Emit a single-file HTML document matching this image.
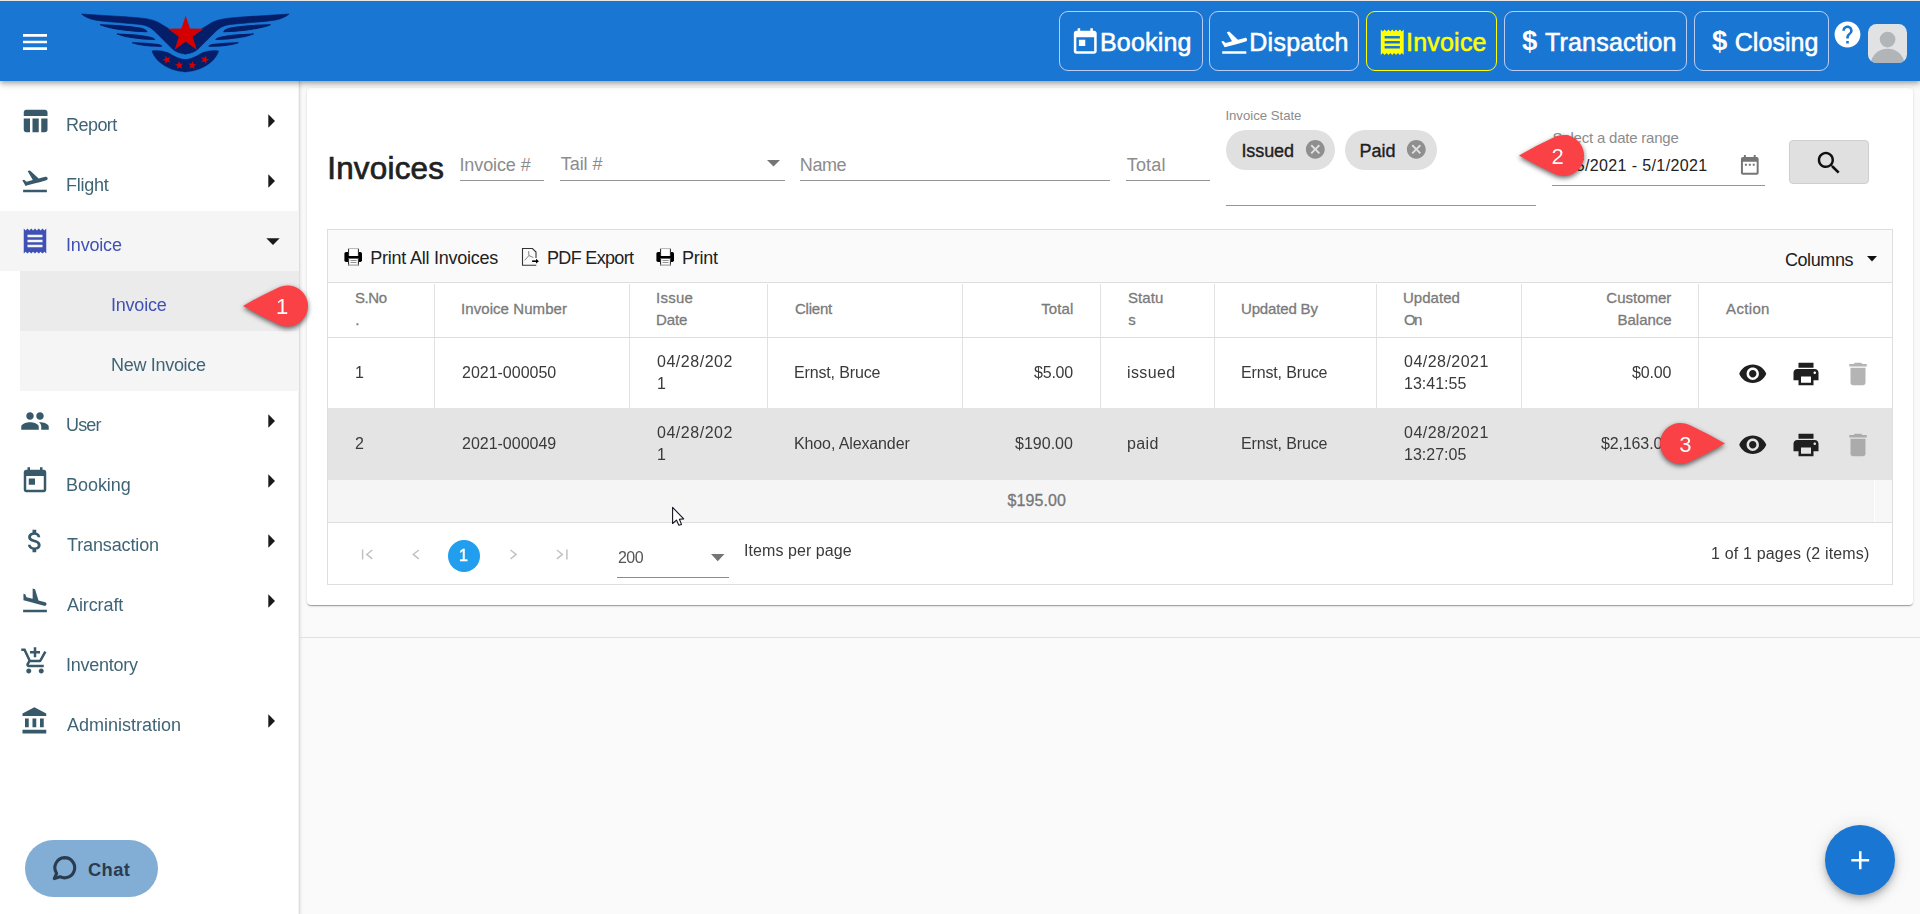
<!DOCTYPE html>
<html lang="en"><head><meta charset="utf-8"><title>Invoices</title>
<style>
html,body{margin:0;padding:0}
body{width:1920px;height:914px;overflow:hidden;position:relative;background:#fafafa;font-family:"Liberation Sans",sans-serif}
div,svg,span{position:absolute;box-sizing:border-box}
.t{white-space:nowrap;line-height:1;z-index:5}
.w{left:0;top:0;width:0;height:0;font-size:0;line-height:0}
.i{display:block;z-index:4;overflow:visible}
.topbar{left:0;top:0;width:1920px;height:81px;background:#1976d2;box-shadow:0 2px 4px -1px rgba(0,0,0,.2),0 4px 5px 0 rgba(0,0,0,.14),0 1px 10px 0 rgba(0,0,0,.12);z-index:3}
.topline{left:0;top:0;width:1920px;height:1px;background:#e9e6e3;z-index:4}
.tbtn{top:11px;height:60px;border:1px solid;border-radius:9px;box-sizing:content-box;height:58px;z-index:4}
.sidebar{left:0;top:81px;width:300px;height:833px;background:#fff;border-right:1px solid #dedede;box-shadow:inset -1px 0 0 #f4f4f4;z-index:1}
.sbsh{left:300px;top:81px;width:3px;height:833px;background:linear-gradient(to right,#ebebeb,#fafafa);z-index:0}
.sb-hl{z-index:2}
.avatar{left:1868px;top:23.800px;width:39.200px;height:39px;border-radius:8.500px;background:#e1e2e3;overflow:hidden;z-index:4}
.chat{left:25px;top:840px;width:133px;height:57px;border-radius:29px;background:#82add4;z-index:3}
.hline{left:300px;top:637px;width:1620px;height:1px;background:#e0e0e0}
.card{left:307px;top:88px;width:1606px;height:517px;background:#fff;border-radius:4px;box-shadow:0 2px 1px -1px rgba(0,0,0,.2),0 1px 1px 0 rgba(0,0,0,.14),0 1px 3px 0 rgba(0,0,0,.12);z-index:1}
.ul{height:1px;z-index:3}
.chip{top:130px;height:40px;border-radius:20px;background:#e0e0e0;z-index:2}
.sbtn{left:1789px;top:140px;width:80px;height:44px;background:#e0e0e0;border:1px solid #cfcfcf;border-radius:4px;z-index:2}
.grid{left:327px;top:229px;width:1566px;height:356px;border:1px solid #dedede;background:#fff;z-index:2}
.toolbar{left:328px;top:230px;width:1564px;height:53px;background:#fafafa;border-bottom:1px solid #dedede;z-index:3}
.ghead{left:328px;top:283px;width:1564px;height:54px;background:#fff;z-index:3}
.row2{left:328px;top:408px;width:1564px;height:72px;background:#e4e4e4;z-index:4}
.gfoot{left:328px;top:480px;width:1564px;height:42px;background:#f5f5f5;z-index:4}
.gfoot2{left:1874px;top:480px;width:18px;height:42px;background:#f7f7f7;border-left:1px solid #fff;z-index:4}
.gline{left:328px;width:1564px;height:1px;background:#dedede;z-index:4}
.vline{top:284px;width:1px;height:124px;background:#e2e2e2;z-index:3}
.pgc{left:447.800px;top:539.500px;width:32px;height:32px;border-radius:50%;background:#229eee;z-index:4}
.fab{left:1825px;top:825px;width:70px;height:70px;border-radius:50%;background:#1976d2;box-shadow:0 3px 5px -1px rgba(0,0,0,.2),0 6px 10px 0 rgba(0,0,0,.14),0 1px 18px 0 rgba(0,0,0,.12);z-index:5}
.mk{z-index:20;filter:drop-shadow(0 2.5px 2.5px rgba(0,0,0,.6));pointer-events:none}
</style></head>
<body>
<header>
<div class="topbar"></div>
<div class="topline"></div>
<svg class="i" style="left:19.00px;top:26.00px;" width="32" height="32" viewBox="0 0 24 24"><path fill="#fff" d="M3 18h18v-2H3v2zm0-5h18v-2H3v2zm0-7v2h18V6H3z"/></svg>
<svg class="i" style="left:0;top:0" width="320" height="81" viewBox="0 0 320 81"><g fill="#041e69" stroke="#041e69" stroke-linejoin="round"><path stroke-width=".600" d="M81.600 14C95 15 120 16.300 135 17.500C148 18.500 155 20 161 24L168.300 28.400L186.300 42L186.300 53.900L185.500 53.900C180 53.600 176 52 172.800 49.300L156.400 32.900C152 28.500 149 26.200 143 24.900C130 23 108 22.100 96 20.200C90 19.100 84.500 16.900 81.600 14Z"/>
<path stroke-width="1.100" d="M100.400 24.700C115 25 132 26.500 141 28.200C144 29 146 30.300 146.800 31.700C135 31.500 112 29.500 100.400 24.700Z"/>
<path stroke-width="1.100" d="M117.300 34.100C130 34.500 143 35.800 150 37.200C152.500 37.800 154 38.600 154.600 39.500C143 39.300 127 37.800 117.300 34.100Z"/>
<path stroke-width="1.100" d="M132.500 42.800C142 42.900 152 43.800 158 44.600C160 45 161 45.500 161.600 46.100C152 46.300 140 45.400 132.500 42.800Z"/>
<path stroke-width=".300" d="M151.900 50.900C156 50 162 50.300 167.900 52.600C172 54.500 176 58.300 185.500 59.600L186.300 59.600L186.300 71.900L185.500 71.900C175 71.500 166 67.500 160 62.500C156 59 153 55 151.900 50.900Z"/></g><g fill="#041e69" stroke="#041e69" stroke-linejoin="round" transform="translate(370.600 0) scale(-1 1)"><path stroke-width=".600" d="M81.600 14C95 15 120 16.300 135 17.500C148 18.500 155 20 161 24L168.300 28.400L186.300 42L186.300 53.900L185.500 53.900C180 53.600 176 52 172.800 49.300L156.400 32.900C152 28.500 149 26.200 143 24.900C130 23 108 22.100 96 20.200C90 19.100 84.500 16.900 81.600 14Z"/>
<path stroke-width="1.100" d="M100.400 24.700C115 25 132 26.500 141 28.200C144 29 146 30.300 146.800 31.700C135 31.500 112 29.500 100.400 24.700Z"/>
<path stroke-width="1.100" d="M117.300 34.100C130 34.500 143 35.800 150 37.200C152.500 37.800 154 38.600 154.600 39.500C143 39.300 127 37.800 117.300 34.100Z"/>
<path stroke-width="1.100" d="M132.500 42.800C142 42.900 152 43.800 158 44.600C160 45 161 45.500 161.600 46.100C152 46.300 140 45.400 132.500 42.800Z"/>
<path stroke-width=".300" d="M151.900 50.900C156 50 162 50.300 167.900 52.600C172 54.500 176 58.300 185.500 59.600L186.300 59.600L186.300 71.900L185.500 71.900C175 71.500 166 67.500 160 62.500C156 59 153 55 151.900 50.900Z"/></g>
<polygon fill="#d40000" points="185.70,15.70 190.01,28.57 203.58,28.69 192.67,36.77 196.75,49.71 185.70,41.83 174.65,49.71 178.73,36.77 167.82,28.69 181.39,28.57"/>
<polygon fill="#d40000" points="165.44,55.62 167.37,58.04 170.36,57.21 168.65,59.80 170.36,62.39 167.37,61.56 165.44,63.98 165.30,60.89 162.40,59.80 165.30,58.71"/><polygon fill="#d40000" points="178.74,60.92 180.12,63.70 183.22,63.51 181.01,65.68 182.14,68.57 179.39,67.14 177.00,69.11 177.51,66.05 174.90,64.39 177.96,63.93"/>
<polygon fill="#d40000" points="192.76,60.92 193.54,63.93 196.60,64.39 193.99,66.05 194.50,69.11 192.11,67.14 189.36,68.57 190.49,65.68 188.28,63.51 191.38,63.70"/><polygon fill="#d40000" points="206.16,55.52 206.30,58.61 209.20,59.70 206.30,60.79 206.16,63.88 204.23,61.46 201.24,62.29 202.95,59.70 201.24,57.11 204.23,57.94"/></svg>
<div class="tbtn" style="left:1059px;width:142px;border-color:rgba(225,228,255,.8)"></div>
<div class="tbtn" style="left:1209px;width:148px;border-color:rgba(225,228,255,.8)"></div>
<div class="tbtn" style="left:1366px;width:129px;border-color:#ffff00"></div>
<div class="tbtn" style="left:1504px;width:181px;border-color:rgba(225,228,255,.8)"></div>
<div class="tbtn" style="left:1694px;width:133px;border-color:rgba(225,228,255,.8)"></div>
<svg class="i" style="left:1070.35px;top:26.55px;" width="30.5" height="30.5" viewBox="0 0 24 24"><path fill="#fff" d="M19 3h-1V1h-2v2H8V1H6v2H5c-1.11 0-1.99.9-1.99 2L3 19c0 1.1.89 2 2 2h14c1.1 0 2-.9 2-2V5c0-1.1-.9-2-2-2zm0 16H5V8h14v11zM7 10h5v5H7z"/></svg>
<svg class="i" style="left:1219.35px;top:26.55px;" width="30.5" height="30.5" viewBox="0 0 24 24"><path fill="#fff" d="M2.5 19h19v2h-19zm19.57-9.36c-.21-.8-1.04-1.28-1.84-1.06L14.92 10l-6.9-6.43-1.93.51 4.14 7.17-4.97 1.33-1.97-1.54-1.45.39 1.82 3.16.77 1.33 1.6-.43 5.31-1.42 4.35-1.16L21 11.49c.81-.23 1.28-1.05 1.07-1.85z"/></svg>
<svg class="i" style="left:1376.75px;top:26.95px;" width="30.5" height="30.5" viewBox="0 0 24 24"><path fill="#ffff00" d="M18 17H6v-2h12v2zm0-4H6v-2h12v2zm0-4H6V7h12v2zM3 22l1.5-1.5L6 22l1.5-1.5L9 22l1.5-1.5L12 22l1.5-1.5L15 22l1.5-1.5L18 22l1.5-1.5L21 22V2l-1.5 1.5L18 2l-1.5 1.5L15 2l-1.5 1.5L12 2l-1.5 1.5L9 2 7.5 3.5 6 2 4.500 3.5 3 2v20z"/></svg>
<svg class="i" style="left:1831.90px;top:18.50px;" width="31" height="31" viewBox="0 0 24 24"><path fill="#fff" d="M12 2C6.48 2 2 6.48 2 12s4.48 10 10 10 10-4.48 10-10S17.52 2 12 2zm1 17h-2v-2h2v2zm2.070-7.750l-.9.920C13.450 12.900 13 13.500 13 15h-2v-.500c0-1.100.450-2.100 1.170-2.830l1.240-1.260c.370-.360.590-.860.590-1.410 0-1.100-.900-2-2-2s-2 .900-2 2H8c0-2.210 1.790-4 4-4s4 1.790 4 4c0 .880-.360 1.680-.930 2.250z"/></svg>
<div class="avatar"><svg class="i" style="left:0;top:0" width="39.200" height="39" viewBox="0 0 40 40" preserveAspectRatio="none"><circle cx="20" cy="16" r="8" fill="#b1b5b7"/><ellipse cx="20" cy="41" rx="17" ry="15.500" fill="#b1b5b7"/></svg></div>
<span class="t" style="left:1099.90px;top:30px;font-size:25px;color:#fff;letter-spacing:0.210px;-webkit-text-stroke:0.55px #fff;">Booking</span>
<span class="t" style="left:1249.30px;top:30px;font-size:25px;color:#fff;letter-spacing:0.263px;-webkit-text-stroke:0.55px #fff;">Dispatch</span>
<span class="t" style="left:1406.00px;top:30px;font-size:25px;color:#ffff00;letter-spacing:0.215px;-webkit-text-stroke:0.55px #ffff00;">Invoice</span>
<span class="t" style="left:1545.00px;top:30px;font-size:25px;color:#fff;letter-spacing:0.182px;-webkit-text-stroke:0.55px #fff;">Transaction</span>
<span class="t" style="left:1734.80px;top:30px;font-size:25px;color:#fff;letter-spacing:0.022px;-webkit-text-stroke:0.55px #fff;">Closing</span>
<span class="t" style="left:1521.90px;top:27px;font-size:27.5px;color:#fff;font-weight:700;">$</span>
<span class="t" style="left:1711.90px;top:27px;font-size:27.5px;color:#fff;font-weight:700;">$</span>
</header>
<nav>
<div class="sidebar"></div><div class="sbsh"></div>
<div class="sb-hl" style="left:0;top:211px;width:299px;height:60px;background:#f5f5f5"></div>
<div class="sb-hl" style="left:20px;top:271px;width:279px;height:60px;background:#ebebeb"></div>
<div class="sb-hl" style="left:20px;top:331px;width:279px;height:60px;background:#f5f5f5"></div>
<svg class="i" style="left:20.00px;top:106.30px;" width="30" height="30" viewBox="0 0 24 24"><path fill="#37596a" d="M10 10.02h5V21h-5zM17 21h3c1.1 0 2-.9 2-2v-9h-5v11zm3-18H5c-1.1 0-2 .9-2 2v3h19V5c0-1.1-.9-2-2-2zM3 19c0 1.1.9 2 2 2h3V10H3v9z"/></svg>
<svg class="i" style="left:255.20px;top:104.60px;" width="32" height="32" viewBox="0 0 24 24"><path fill="#1a1a1a" d="M10 17l5-5-5-5v10z"/></svg>
<svg class="i" style="left:20.00px;top:166.30px;" width="30" height="30" viewBox="0 0 24 24"><path fill="#37596a" d="M2.5 19h19v2h-19zm19.57-9.36c-.21-.8-1.04-1.28-1.84-1.06L14.92 10l-6.9-6.43-1.93.51 4.14 7.17-4.97 1.33-1.97-1.54-1.45.39 1.82 3.16.77 1.33 1.6-.43 5.31-1.42 4.35-1.16L21 11.49c.81-.23 1.28-1.05 1.07-1.85z"/></svg>
<svg class="i" style="left:255.20px;top:164.60px;" width="32" height="32" viewBox="0 0 24 24"><path fill="#1a1a1a" d="M10 17l5-5-5-5v10z"/></svg>
<svg class="i" style="left:20.00px;top:226.30px;" width="30" height="30" viewBox="0 0 24 24"><path fill="#3f51b5" d="M18 17H6v-2h12v2zm0-4H6v-2h12v2zm0-4H6V7h12v2zM3 22l1.5-1.5L6 22l1.5-1.5L9 22l1.5-1.5L12 22l1.5-1.5L15 22l1.5-1.5L18 22l1.5-1.5L21 22V2l-1.5 1.5L18 2l-1.5 1.5L15 2l-1.5 1.5L12 2l-1.5 1.5L9 2 7.5 3.5 6 2 4.500 3.5 3 2v20z"/></svg>
<svg class="i" style="left:256.50px;top:224.70px;" width="32" height="32" viewBox="0 0 24 24"><path fill="#1a1a1a" d="M7 10l5 5 5-5z"/></svg>
<svg class="i" style="left:20.00px;top:406.30px;" width="30" height="30" viewBox="0 0 24 24"><path fill="#37596a" d="M16 11c1.66 0 2.99-1.34 2.99-3S17.66 5 16 5c-1.66 0-3 1.34-3 3s1.34 3 3 3zm-8 0c1.66 0 2.99-1.34 2.99-3S9.66 5 8 5C6.34 5 5 6.34 5 8s1.34 3 3 3zm0 2c-2.33 0-7 1.17-7 3.5V19h14v-2.500c0-2.33-4.67-3.5-7-3.5zm8 0c-.29 0-.62.02-.97.05 1.16.84 1.97 1.97 1.97 3.45V19h6v-2.500c0-2.33-4.67-3.5-7-3.5z"/></svg>
<svg class="i" style="left:255.20px;top:404.60px;" width="32" height="32" viewBox="0 0 24 24"><path fill="#1a1a1a" d="M10 17l5-5-5-5v10z"/></svg>
<svg class="i" style="left:20.00px;top:466.30px;" width="30" height="30" viewBox="0 0 24 24"><path fill="#37596a" d="M19 3h-1V1h-2v2H8V1H6v2H5c-1.11 0-1.99.9-1.99 2L3 19c0 1.1.89 2 2 2h14c1.1 0 2-.9 2-2V5c0-1.1-.9-2-2-2zm0 16H5V8h14v11zM7 10h5v5H7z"/></svg>
<svg class="i" style="left:255.20px;top:464.60px;" width="32" height="32" viewBox="0 0 24 24"><path fill="#1a1a1a" d="M10 17l5-5-5-5v10z"/></svg>
<svg class="i" style="left:20.00px;top:526.30px;" width="30" height="30" viewBox="0 0 24 24"><path fill="#37596a" d="M11.8 10.9c-2.27-.59-3-1.2-3-2.15 0-1.09 1.01-1.85 2.7-1.85 1.78 0 2.44.85 2.5 2.1h2.21c-.07-1.72-1.12-3.3-3.21-3.81V3h-3v2.160c-1.94.42-3.5 1.68-3.5 3.61 0 2.31 1.91 3.46 4.7 4.13 2.5.6 3 1.48 3 2.41 0 .69-.49 1.79-2.7 1.79-2.06 0-2.87-.92-2.98-2.1h-2.2c.12 2.19 1.76 3.42 3.68 3.83V21h3v-2.150c1.95-.37 3.5-1.5 3.5-3.55 0-2.84-2.43-3.81-4.7-4.4z"/></svg>
<svg class="i" style="left:255.20px;top:524.60px;" width="32" height="32" viewBox="0 0 24 24"><path fill="#1a1a1a" d="M10 17l5-5-5-5v10z"/></svg>
<svg class="i" style="left:20.00px;top:586.30px;" width="30" height="30" viewBox="0 0 24 24"><path fill="#37596a" d="M2.5 19h19v2h-19zm7.18-5.73l4.35 1.16 5.31 1.42c.8.21 1.62-.26 1.84-1.06.21-.8-.26-1.62-1.06-1.84l-5.31-1.42-2.76-9.02L10.120 2v8.28L5.15 8.95l-.93-2.32-1.45-.39v5.17l1.6.43 5.31 1.430z"/></svg>
<svg class="i" style="left:255.20px;top:584.60px;" width="32" height="32" viewBox="0 0 24 24"><path fill="#1a1a1a" d="M10 17l5-5-5-5v10z"/></svg>
<svg class="i" style="left:20.00px;top:646.30px;" width="30" height="30" viewBox="0 0 24 24"><path fill="#37596a" d="M11 9h2V6h3V4h-3V1h-2v3H8v2h3v3zm-4 9c-1.1 0-1.99.9-1.99 2S5.9 22 7 22s2-.9 2-2-.9-2-2-2zm10 0c-1.1 0-1.99.9-1.99 2s.89 2 1.990 2 2-.9 2-2-.9-2-2-2zm-9.830-3.25l.03-.12.9-1.63h7.450c.75 0 1.410-.41 1.750-1.030l3.860-7.010L19.420 4h-.010l-1.100 2-2.760 5H8.530l-.130-.270L6.160 6l-.950-2-.940-2H1v2h2l3.600 7.590-1.350 2.450c-.160.280-.250.610-.250.960 0 1.100.900 2 2 2h12v-2H7.420c-.130 0-.250-.110-.250-.250z"/></svg>
<svg class="i" style="left:20.00px;top:706.30px;" width="30" height="30" viewBox="0 0 24 24"><path fill="#37596a" d="M4 10v7h3v-7H4zm6 0v7h3v-7h-3zM2 22h19v-3H2v3zm14-12v7h3v-7h-3zm-4.500-9L2 6v2h19V6l-9.500-5z"/></svg>
<svg class="i" style="left:255.20px;top:704.60px;" width="32" height="32" viewBox="0 0 24 24"><path fill="#1a1a1a" d="M10 17l5-5-5-5v10z"/></svg>
<div class="chat"></div>
<svg class="i" style="left:50px;top:853px" width="30" height="32" viewBox="0 0 30 32"><path fill="none" stroke="#2a3c4f" stroke-width="3.1" stroke-linejoin="round" stroke-linecap="round" d="M14.6 4.6a10.1 10.1 0 1 1 -4.6 19.1 L4.3 25.6 L6.6 20.3 A10.1 10.1 0 0 1 14.6 4.6z"/></svg>
<span class="t" style="left:65.50px;top:116px;font-size:18px;color:#3f6475;letter-spacing:-0.545px;will-change:transform;">Report</span>
<span class="t" style="left:65.50px;top:176px;font-size:18px;color:#3f6475;letter-spacing:-0.243px;will-change:transform;">Flight</span>
<span class="t" style="left:65.50px;top:236px;font-size:18px;color:#3f51b5;letter-spacing:-0.187px;will-change:transform;">Invoice</span>
<span class="t" style="left:65.50px;top:416px;font-size:18px;color:#3f6475;letter-spacing:-0.870px;will-change:transform;">User</span>
<span class="t" style="left:65.50px;top:476px;font-size:18px;color:#3f6475;letter-spacing:-0.040px;will-change:transform;">Booking</span>
<span class="t" style="left:66.50px;top:536px;font-size:18px;color:#3f6475;letter-spacing:-0.126px;will-change:transform;">Transaction</span>
<span class="t" style="left:66.50px;top:596px;font-size:18px;color:#3f6475;letter-spacing:-0.101px;will-change:transform;">Aircraft</span>
<span class="t" style="left:65.50px;top:656px;font-size:18px;color:#3f6475;letter-spacing:-0.267px;will-change:transform;">Inventory</span>
<span class="t" style="left:66.50px;top:716px;font-size:18px;color:#3f6475;will-change:transform;">Administration</span>
<span class="t" style="left:110.50px;top:296px;font-size:18px;color:#3f51b5;letter-spacing:-0.220px;will-change:transform;">Invoice</span>
<span class="t" style="left:110.50px;top:356px;font-size:18px;color:#3f6475;letter-spacing:-0.303px;will-change:transform;">New Invoice</span>
<span class="t" style="left:88.00px;top:861px;font-size:18.3px;color:#2a3c4f;letter-spacing:0.421px;font-weight:700;">Chat</span>
</nav>
<main>
<div class="hline"></div>
<div class="card"></div>
<div class="ul" style="left:460px;top:180px;width:84px;background:#959595"></div>
<div class="ul" style="left:560px;top:180px;width:225px;background:#959595"></div>
<div class="ul" style="left:800px;top:180px;width:310px;background:#959595"></div>
<div class="ul" style="left:1126px;top:180px;width:84px;background:#959595"></div>
<div class="ul" style="left:1226px;top:205px;width:310px;background:#959595"></div>
<div class="ul" style="left:1552px;top:185px;width:213px;background:#959595"></div>
<svg class="i" style="left:766.5px;top:160px" width="13" height="7" viewBox="0 0 13 7"><path fill="#757575" d="M0 0h13L6.5 6.5z"/></svg>
<div class="chip" style="left:1226px;width:109px"></div>
<div class="chip" style="left:1345px;width:92px"></div>
<svg class="i" style="left:1303.80px;top:138.10px;" width="22.6" height="22.6" viewBox="0 0 24 24"><path fill="#8f8f8f" d="M12 2C6.470 2 2 6.470 2 12s4.470 10 10 10 10-4.470 10-10S17.530 2 12 2zm5 13.590L15.590 17 12 13.410 8.410 17 7 15.590 10.590 12 7 8.410 8.410 7 12 10.590 15.590 7 17 8.410 13.410 12 17 15.590z"/></svg>
<svg class="i" style="left:1405.00px;top:138.10px;" width="22.6" height="22.6" viewBox="0 0 24 24"><path fill="#8f8f8f" d="M12 2C6.470 2 2 6.470 2 12s4.470 10 10 10 10-4.470 10-10S17.530 2 12 2zm5 13.590L15.590 17 12 13.410 8.410 17 7 15.590 10.590 12 7 8.410 8.410 7 12 10.590 15.590 7 17 8.410 13.410 12 17 15.590z"/></svg>
<svg class="i" style="left:1737.70px;top:153.20px;" width="23.6" height="23.6" viewBox="0 0 24 24"><path fill="#757575" d="M9 11H7v2h2v-2zm4 0h-2v2h2v-2zm4 0h-2v2h2v-2zm2-7h-1V2h-2v2H8V2H6v2H5c-1.110 0-1.990.900-1.990 2L3 20c0 1.100.890 2 2 2h14c1.100 0 2-.900 2-2V6c0-1.100-.900-2-2-2zm0 16H5V9h14v11z"/></svg>
<div class="sbtn"></div>
<svg class="i" style="left:1813.80px;top:147.80px;" width="30" height="30" viewBox="0 0 24 24"><path fill="#111" d="M15.500 14h-.790l-.280-.270C15.410 12.590 16 11.110 16 9.500 16 5.910 13.090 3 9.500 3S3 5.910 3 9.500 5.910 16 9.500 16c1.610 0 3.090-.590 4.230-1.570l.270.280v.790l5 4.990L20.490 19l-4.990-5zm-6 0C7.010 14 5 11.990 5 9.500S7.010 5 9.500 5 14 7.010 14 9.500 11.990 14 9.500 14z"/></svg>
<div class="grid"></div>
<div class="toolbar"></div>
<div class="ghead"></div>
<div class="row2"></div>
<div class="gfoot"></div><div class="gfoot2"></div>
<div class="gline" style="top:337px"></div><div class="gline" style="top:522px"></div>
<div class="vline" style="left:434px"></div>
<div class="vline" style="left:629px"></div>
<div class="vline" style="left:767px"></div>
<div class="vline" style="left:962px"></div>
<div class="vline" style="left:1100px"></div>
<div class="vline" style="left:1214px"></div>
<div class="vline" style="left:1376px"></div>
<div class="vline" style="left:1521px"></div>
<div class="vline" style="left:1698px"></div>
<svg class="i" style="left:1866.5px;top:255.7px" width="10" height="6" viewBox="0 0 10 6"><path fill="#111" d="M0 0h10L5 5.6z"/></svg>
<svg class="i" style="left:344px;top:247px" width="19" height="20" viewBox="0 0 19 20"><rect x=".4" y="4.900" width="17.600" height="10.100" rx="1.700" fill="#000"/><rect x="4.100" y="1.100" width="10.800" height="7.900" fill="#fff"/><path fill="none" stroke="#1a1a1a" stroke-width="1" d="M4.600 9V1.600M14.400 9V1.600"/><path fill="none" stroke="#b5b5b5" stroke-width="1" d="M4.100 1.600h10.800"/><rect x="4.100" y="11.600" width="10.800" height="7.100" fill="#fff"/><path fill="none" stroke="#1a1a1a" stroke-width="1" d="M4.600 11.600v7M14.400 11.600v7"/><path fill="none" stroke="#a8a8a8" stroke-width="1.300" d="M4.100 18.100h10.800"/><path fill="none" stroke="#888" stroke-width=".9" d="M6.400 13.500h6.200M6.400 15.500h6.200"/></svg>
<svg class="i" style="left:656px;top:247px" width="19" height="20" viewBox="0 0 19 20"><rect x=".4" y="4.900" width="17.600" height="10.100" rx="1.700" fill="#000"/><rect x="4.100" y="1.100" width="10.800" height="7.900" fill="#fff"/><path fill="none" stroke="#1a1a1a" stroke-width="1" d="M4.600 9V1.600M14.400 9V1.600"/><path fill="none" stroke="#b5b5b5" stroke-width="1" d="M4.100 1.600h10.800"/><rect x="4.100" y="11.600" width="10.800" height="7.100" fill="#fff"/><path fill="none" stroke="#1a1a1a" stroke-width="1" d="M4.600 11.600v7M14.400 11.600v7"/><path fill="none" stroke="#a8a8a8" stroke-width="1.300" d="M4.100 18.100h10.800"/><path fill="none" stroke="#888" stroke-width=".9" d="M6.400 13.500h6.200M6.400 15.500h6.200"/></svg>
<svg class="i" style="left:522px;top:248px" width="18" height="18" viewBox="0 0 18 18"><path fill="none" stroke="#333" stroke-width="1.100" d="M14 10V4.100L10.400.500H.500v16.700h13.800"/><path fill="none" stroke="#666" stroke-width=".8" d="M6.600 3.200l.3 4.400-4.200 4.700M6.900 7.600l4.500 1.900"/><path fill="none" stroke="#000" stroke-width="1.600" d="M10.100 13.200h5"/><path fill="#000" d="M14 10.800l2.900 2.400-2.900 2.400z"/></svg>
<svg class="i" style="left:1738.25px;top:359.25px;" width="29.5" height="29.5" viewBox="0 0 24 24"><path fill="#1f1f1f" d="M12 4.500C7 4.500 2.730 7.610 1 12c1.730 4.390 6 7.500 11 7.500s9.270-3.110 11-7.500c-1.730-4.390-6-7.500-11-7.500zM12 17c-2.760 0-5-2.240-5-5s2.240-5 5-5 5 2.240 5 5-2.240 5-5 5zm0-8c-1.660 0-3 1.340-3 3s1.340 3 3 3 3-1.340 3-3-1.340-3-3-3z"/></svg>
<svg class="i" style="left:1790.50px;top:359.00px;" width="30" height="30" viewBox="0 0 24 24"><path fill="#1f1f1f" d="M19 8H5c-1.660 0-3 1.340-3 3v6h4v4h12v-4h4v-6c0-1.660-1.340-3-3-3zm-3 11H8v-5h8v5zm3-7c-.550 0-1-.450-1-1s.450-1 1-1 1 .450 1 1-.450 1-1 1zm-1-9H6v4h12V3z"/></svg>
<svg class="i" style="left:1843.00px;top:359.00px;" width="30" height="30" viewBox="0 0 24 24"><path fill="#b4b4b4" d="M6 19c0 1.100.900 2 2 2h8c1.100 0 2-.900 2-2V7H6v12zM19 4h-3.500l-1-1h-5l-1 1H5v2h14V4z"/></svg>
<svg class="i" style="left:1738.25px;top:430.25px;" width="29.5" height="29.5" viewBox="0 0 24 24"><path fill="#1f1f1f" d="M12 4.500C7 4.500 2.730 7.610 1 12c1.730 4.390 6 7.500 11 7.500s9.270-3.110 11-7.500c-1.730-4.390-6-7.500-11-7.500zM12 17c-2.760 0-5-2.240-5-5s2.240-5 5-5 5 2.240 5 5-2.240 5-5 5zm0-8c-1.660 0-3 1.340-3 3s1.340 3 3 3 3-1.340 3-3-1.340-3-3-3z"/></svg>
<svg class="i" style="left:1790.50px;top:430.00px;" width="30" height="30" viewBox="0 0 24 24"><path fill="#1f1f1f" d="M19 8H5c-1.660 0-3 1.340-3 3v6h4v4h12v-4h4v-6c0-1.660-1.340-3-3-3zm-3 11H8v-5h8v5zm3-7c-.550 0-1-.450-1-1s.450-1 1-1 1 .450 1 1-.450 1-1 1zm-1-9H6v4h12V3z"/></svg>
<svg class="i" style="left:1843.00px;top:430.00px;" width="30" height="30" viewBox="0 0 24 24"><path fill="#ababab" d="M6 19c0 1.100.900 2 2 2h8c1.100 0 2-.900 2-2V7H6v12zM19 4h-3.500l-1-1h-5l-1 1H5v2h14V4z"/></svg>
<svg class="i" style="left:355px;top:540px" width="220" height="30" viewBox="355 540 220 30"><path fill="none" stroke="#c2c2c2" stroke-width="1.500" d="M362.600 549.500v10M372.300 550l-5.500 4.400 5.500 4.400M418.800 550l-5.500 4.400 5.500 4.400M510.600 550l5.500 4.400-5.500 4.400M556.900 550l5.500 4.400-5.500 4.400M566.900 549.500v10"/></svg>
<div class="pgc"></div>
<svg class="i" style="left:711.3px;top:553.8px" width="13.500" height="7.500" viewBox="0 0 13.500 7.500"><path fill="#757575" d="M0 0h13.500L6.750 7.200z"/></svg>
<div class="ul" style="left:617px;top:577px;width:112px;background:#8a8a8a"></div>
<span class="t" style="left:327.20px;top:153px;font-size:31.4px;color:#212121;letter-spacing:0.234px;-webkit-text-stroke:0.7px #212121;">Invoices</span>
<span class="t" style="left:459.40px;top:156px;font-size:18px;color:#8c8c8c;letter-spacing:-0.092px;">Invoice #</span>
<span class="t" style="left:560.80px;top:155px;font-size:18px;color:#8c8c8c;letter-spacing:-0.082px;">Tail #</span>
<span class="t" style="left:799.80px;top:156px;font-size:18px;color:#8c8c8c;letter-spacing:-0.401px;">Name</span>
<span class="t" style="left:1126.70px;top:156px;font-size:18px;color:#8c8c8c;letter-spacing:0.194px;">Total</span>
<span class="t" style="left:1225.40px;top:109px;font-size:13.2px;color:#8c8c8c;letter-spacing:-0.017px;">Invoice State</span>
<span class="t" style="left:1241.40px;top:142px;font-size:18px;color:#212121;letter-spacing:-0.084px;-webkit-text-stroke:0.35px #212121;">Issued</span>
<span class="t" style="left:1359.40px;top:142px;font-size:18px;color:#212121;letter-spacing:-0.005px;-webkit-text-stroke:0.35px #212121;">Paid</span>
<span class="t" style="left:1552.50px;top:130px;font-size:15px;color:#8c8c8c;letter-spacing:-0.208px;">Select a date range</span>
<span class="t" style="left:1552.30px;top:158px;font-size:16px;color:#212121;letter-spacing:0.380px;">4/25/2021 - 5/1/2021</span>
<span class="t" style="left:370.30px;top:249px;font-size:18px;color:#212121;letter-spacing:-0.238px;">Print All Invoices</span>
<span class="t" style="left:547.00px;top:249px;font-size:18px;color:#212121;letter-spacing:-0.669px;">PDF Export</span>
<span class="t" style="left:682.00px;top:249px;font-size:18px;color:#212121;letter-spacing:-0.252px;">Print</span>
<span class="t" style="left:1784.90px;top:251px;font-size:18px;color:#212121;letter-spacing:-0.404px;">Columns</span>
<span class="w"><span class="t" style="left:355.00px;top:290px;font-size:15px;color:#7a7a7a;letter-spacing:-0.402px;-webkit-text-stroke:0.3px #7a7a7a;">S.No</span><span class="t" style="left:355.20px;top:312px;font-size:15px;color:#7a7a7a;-webkit-text-stroke:0.3px #7a7a7a;">.</span></span>
<span class="t" style="left:461.00px;top:301px;font-size:15px;color:#7a7a7a;letter-spacing:0.073px;-webkit-text-stroke:0.3px #7a7a7a;">Invoice Number</span>
<span class="w"><span class="t" style="left:656.00px;top:290px;font-size:15px;color:#7a7a7a;letter-spacing:0.248px;-webkit-text-stroke:0.3px #7a7a7a;">Issue</span> <span class="t" style="left:656.00px;top:312px;font-size:15px;color:#7a7a7a;letter-spacing:-0.114px;-webkit-text-stroke:0.3px #7a7a7a;">Date</span></span>
<span class="t" style="left:795.00px;top:301px;font-size:15px;color:#7a7a7a;letter-spacing:-0.236px;-webkit-text-stroke:0.3px #7a7a7a;">Client</span>
<span class="t" style="left:1041.20px;top:301px;font-size:15px;color:#7a7a7a;letter-spacing:0.112px;-webkit-text-stroke:0.3px #7a7a7a;">Total</span>
<span class="w"><span class="t" style="left:1128.00px;top:290px;font-size:15px;color:#7a7a7a;letter-spacing:0.079px;-webkit-text-stroke:0.3px #7a7a7a;">Statu</span><span class="t" style="left:1128.30px;top:312px;font-size:15px;color:#7a7a7a;-webkit-text-stroke:0.3px #7a7a7a;">s</span></span>
<span class="t" style="left:1241.00px;top:301px;font-size:15px;color:#7a7a7a;letter-spacing:-0.165px;-webkit-text-stroke:0.3px #7a7a7a;">Updated By</span>
<span class="w"><span class="t" style="left:1403.00px;top:290px;font-size:15px;color:#7a7a7a;letter-spacing:0.022px;-webkit-text-stroke:0.3px #7a7a7a;">Updated</span> <span class="t" style="left:1404.00px;top:312px;font-size:15px;color:#7a7a7a;letter-spacing:-1.667px;-webkit-text-stroke:0.3px #7a7a7a;">On</span></span>
<span class="w"><span class="t" style="left:1606.30px;top:290px;font-size:15px;color:#7a7a7a;-webkit-text-stroke:0.3px #7a7a7a;">Customer</span> <span class="t" style="left:1617.50px;top:312px;font-size:15px;color:#7a7a7a;letter-spacing:-0.011px;-webkit-text-stroke:0.3px #7a7a7a;">Balance</span></span>
<span class="t" style="left:1726.10px;top:301px;font-size:15px;color:#7a7a7a;letter-spacing:0.331px;-webkit-text-stroke:0.3px #7a7a7a;">Action</span>
<span class="t" style="left:354.80px;top:365px;font-size:16px;color:#3a3a3a;will-change:transform;">1</span>
<span class="t" style="left:462.00px;top:365px;font-size:16px;color:#3a3a3a;letter-spacing:-0.011px;will-change:transform;">2021-000050</span>
<span class="w"><span class="t" style="left:657.00px;top:354px;font-size:16px;color:#3a3a3a;letter-spacing:0.527px;will-change:transform;">04/28/202</span><span class="t" style="left:657.00px;top:376px;font-size:16px;color:#3a3a3a;will-change:transform;">1</span></span>
<span class="t" style="left:794.00px;top:365px;font-size:16px;color:#3a3a3a;letter-spacing:-0.148px;will-change:transform;">Ernst, Bruce</span>
<span class="t" style="left:1033.70px;top:365px;font-size:16px;color:#3a3a3a;letter-spacing:-0.210px;will-change:transform;">$5.00</span>
<span class="t" style="left:1127.00px;top:365px;font-size:16px;color:#3a3a3a;letter-spacing:0.390px;will-change:transform;">issued</span>
<span class="t" style="left:1241.00px;top:365px;font-size:16px;color:#3a3a3a;letter-spacing:-0.148px;will-change:transform;">Ernst, Bruce</span>
<span class="w"><span class="t" style="left:1404.00px;top:354px;font-size:16px;color:#3a3a3a;letter-spacing:0.480px;will-change:transform;">04/28/2021</span> <span class="t" style="left:1403.60px;top:376px;font-size:16px;color:#3a3a3a;will-change:transform;">13:41:55</span></span>
<span class="t" style="left:1631.50px;top:365px;font-size:16px;color:#3a3a3a;letter-spacing:-0.160px;will-change:transform;">$0.00</span>
<span class="t" style="left:354.80px;top:436px;font-size:16px;color:#3a3a3a;will-change:transform;">2</span>
<span class="t" style="left:462.00px;top:436px;font-size:16px;color:#3a3a3a;letter-spacing:-0.011px;will-change:transform;">2021-000049</span>
<span class="w"><span class="t" style="left:657.00px;top:425px;font-size:16px;color:#3a3a3a;letter-spacing:0.527px;will-change:transform;">04/28/202</span><span class="t" style="left:657.00px;top:447px;font-size:16px;color:#3a3a3a;will-change:transform;">1</span></span>
<span class="t" style="left:794.00px;top:436px;font-size:16px;color:#3a3a3a;letter-spacing:-0.120px;will-change:transform;">Khoo, Alexander</span>
<span class="t" style="left:1015.00px;top:436px;font-size:16px;color:#3a3a3a;letter-spacing:0.010px;will-change:transform;">$190.00</span>
<span class="t" style="left:1127.00px;top:436px;font-size:16px;color:#3a3a3a;letter-spacing:0.383px;will-change:transform;">paid</span>
<span class="t" style="left:1241.00px;top:436px;font-size:16px;color:#3a3a3a;letter-spacing:-0.148px;will-change:transform;">Ernst, Bruce</span>
<span class="w"><span class="t" style="left:1404.00px;top:425px;font-size:16px;color:#3a3a3a;letter-spacing:0.480px;will-change:transform;">04/28/2021</span> <span class="t" style="left:1403.60px;top:447px;font-size:16px;color:#3a3a3a;will-change:transform;">13:27:05</span></span>
<span class="t" style="left:1600.80px;top:436px;font-size:16px;color:#3a3a3a;letter-spacing:-0.135px;will-change:transform;">$2,163.00</span>
<span class="t" style="left:1007.50px;top:493px;font-size:16px;color:#777;letter-spacing:0.094px;-webkit-text-stroke:0.3px #777;">$195.00</span>
<span class="t" style="left:459.30px;top:548px;font-size:16px;color:#fff;-webkit-text-stroke:0.5px #fff;will-change:transform;">1</span>
<span class="t" style="left:617.50px;top:550px;font-size:16px;color:#555;letter-spacing:-0.548px;will-change:transform;">200</span>
<span class="t" style="left:744.00px;top:543px;font-size:16px;color:#3a3a3a;letter-spacing:0.067px;will-change:transform;">Items per page</span>
<span class="t" style="left:1711.10px;top:546px;font-size:16px;color:#3a3a3a;letter-spacing:0.171px;will-change:transform;">1 of 1 pages (2 items)</span>
</main>
<aside>
<svg class="i mk" style="left:0;top:0" width="1920" height="914" viewBox="0 0 1920 914"><path fill="#fa4146" d="M243.00 306.00Q260.53 295.90 278.06 287.80A20.5 20.5 0 1 1 278.06 324.20Q260.53 316.10 243.00 306.00Z"/></svg>
<svg class="i mk" style="left:0;top:0" width="1920" height="914" viewBox="0 0 1920 914"><path fill="#fa4146" d="M1519.00 155.50Q1536.53 145.40 1554.06 137.30A20.5 20.5 0 1 1 1554.06 173.70Q1536.53 165.60 1519.00 155.50Z"/></svg>
<svg class="i mk" style="left:0;top:0" width="1920" height="914" viewBox="0 0 1920 914"><path fill="#fa4146" d="M1725.00 443.50Q1707.47 433.40 1689.94 425.30A20.5 20.5 0 1 0 1689.94 461.70Q1707.47 453.60 1725.00 443.50Z"/></svg>
<div class="fab"></div>
<svg class="i" style="left:1844.55px;top:845.45px;z-index:6;" width="30.5" height="30.5" viewBox="0 0 24 24"><path fill="#fff" d="M19 13h-6v6h-2v-6H5v-2h6V5h2v6h6v2z"/></svg>
<svg class="i" style="left:671px;top:506px;z-index:40" width="16" height="24" viewBox="0 0 16 24"><path fill="#fff" stroke="#14141f" stroke-width="1.100" stroke-linejoin="round" d="M1.600 1.400V17.500L5.450 14.100L7.900 19.300L10.500 18.400L8.400 13.300L12.700 12.900Z"/></svg>
<span class="t" style="left:276.10px;top:296px;font-size:22px;color:#fff;z-index:30;">1</span>
<span class="t" style="left:1551.40px;top:146px;font-size:22px;color:#fff;z-index:30;">2</span>
<span class="t" style="left:1679.20px;top:434px;font-size:22px;color:#fff;z-index:30;">3</span>
</aside>
</body></html>
